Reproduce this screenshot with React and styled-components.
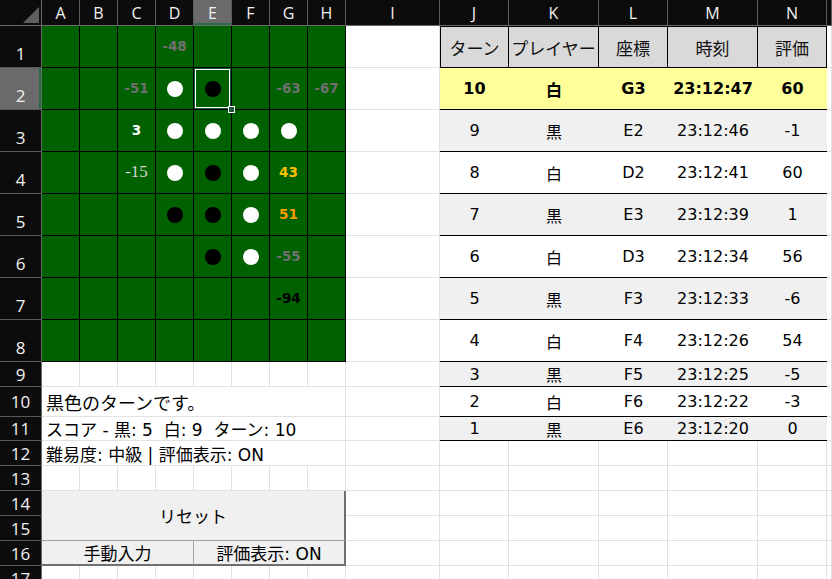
import React from "react";
import styled, { createGlobalStyle, css } from "styled-components";

const GlobalStyle = createGlobalStyle`
  html, body { margin: 0; padding: 0; background: #fff; overflow: hidden; }
  body { font-family: "DejaVu Sans", "Noto Sans CJK JP", sans-serif; }
  * { box-sizing: border-box; }
`;

const COLS = [42, 38, 38, 38, 38, 38, 38, 38, 38, 94, 69, 90, 69, 90, 69];
const ROWS = [26, 42, 42, 42, 42, 42, 42, 42, 42, 25, 30, 24, 25, 25, 25, 25, 25, 25];
const LETTERS = ["A", "B", "C", "D", "E", "F", "G", "H", "I", "J", "K", "L", "M", "N", "O"];

const GRID = "#e1e1e1";
const JP = `"DejaVu Sans", "Noto Sans CJK JP", sans-serif`;

// board: B disc black, W disc white, otherwise score {v, tone}
const BOARD = [
  [null, null, null, { v: "-48", tone: "gray" }, null, null, null, null],
  [null, null, { v: "-51", tone: "gray" }, "W", "B", null, { v: "-63", tone: "gray" }, { v: "-67", tone: "gray" }],
  [null, null, { v: "3", tone: "white" }, "W", "W", "W", "W", null],
  [null, null, { v: "-15", tone: "light" }, "W", "B", "W", { v: "43", tone: "yellow" }, null],
  [null, null, null, "B", "B", "W", { v: "51", tone: "orange" }, null],
  [null, null, null, null, "B", "W", { v: "-55", tone: "gray" }, null],
  [null, null, null, null, null, null, { v: "-94", tone: "black" }, null],
  [null, null, null, null, null, null, null, null],
];

const MOVES = [
  ["10", "白", "G3", "23:12:47", "60"],
  ["9", "黒", "E2", "23:12:46", "-1"],
  ["8", "白", "D2", "23:12:41", "60"],
  ["7", "黒", "E3", "23:12:39", "1"],
  ["6", "白", "D3", "23:12:34", "56"],
  ["5", "黒", "F3", "23:12:33", "-6"],
  ["4", "白", "F4", "23:12:26", "54"],
  ["3", "黒", "F5", "23:12:25", "-5"],
  ["2", "白", "F6", "23:12:22", "-3"],
  ["1", "黒", "E6", "23:12:20", "0"],
];

const TONES = {
  gray: "#6f6f6f",
  white: "#ffffff",
  light: "#d4d4d4",
  yellow: "#ffc000",
  orange: "#ff9900",
  black: "#000000",
};

const Sheet = styled.div`
  display: grid;
  grid-template-columns: ${COLS.map((w) => w + "px").join(" ")} 1fr;
  grid-template-rows: ${ROWS.map((h) => h + "px").join(" ")};
  width: 832px;
  height: 579px;
  overflow: hidden;
  background: #fff;
`;

const Corner = styled.div`
  background: #0c0c0c;
  border-right: 1px solid #6a6a6a;
  border-bottom: 1px solid #6a6a6a;
  display: flex;
  align-items: flex-end;
  justify-content: flex-end;
  padding: 0 2px 2px 0;
`;

const ColHead = styled.div`
  background: ${(p) => (p.$active ? "#6a6a6a" : "#0c0c0c")};
  color: #f2f2f2;
  font-family: "Open Sans", "Liberation Sans", sans-serif;
  font-size: 16px;
  display: flex;
  align-items: center;
  justify-content: center;
  border-right: 1px solid #5a5a5a;
  border-bottom: 1px solid #6a6a6a;
  ${(p) => p.$active && css`box-shadow: inset 0 -2px 0 #2b6a44;`}
`;

const RowHead = styled.div`
  background: ${(p) => (p.$active ? "#6a6a6a" : "#0c0c0c")};
  color: #f2f2f2;
  font-family: "Open Sans", "Liberation Sans", sans-serif;
  font-size: 17px;
  display: flex;
  justify-content: center;
  align-items: ${(p) => (p.$tall ? "flex-end" : "center")};
  padding-bottom: ${(p) => (p.$tall ? "2px" : "0")};
  border-right: 1px solid #6a6a6a;
  border-bottom: 1px solid #5a5a5a;
  ${(p) => p.$active && css`box-shadow: inset -2px 0 0 #2b6a44;`}
`;

const Blank = styled.div`
  border-right: 1px solid ${GRID};
  border-bottom: 1px solid ${GRID};
`;

const BoardCell = styled.div`
  position: relative;
  background: #006100;
  border-right: 1px solid #000;
  border-bottom: 1px solid #000;
  display: flex;
  align-items: center;
  justify-content: center;
  ${(p) =>
    p.$selected &&
    css`
      box-shadow: inset 0 0 0 1px #1f5a36, inset 0 0 0 2px #fff;
    `}
`;

const FillHandle = styled.span`
  position: absolute;
  right: -4px;
  bottom: -4px;
  width: 7px;
  height: 7px;
  background: #1f5a36;
  border: 1px solid #fff;
  z-index: 2;
`;

const Disc = styled.span`
  width: 16px;
  height: 16px;
  border-radius: 50%;
  background: ${(p) => (p.$white ? "#fff" : "#000")};
`;

const Score = styled.span`
  font-family: ${(p) => (p.$tone === "light" ? `"Liberation Serif", serif` : `"DejaVu Sans", sans-serif`)};
  font-weight: ${(p) => (p.$tone === "light" ? 400 : 700)};
  font-size: ${(p) => (p.$tone === "light" ? "17px" : "13.5px")};
  color: ${(p) => TONES[p.$tone]};
  margin-top: -1px;
`;

const HeadCell = styled.div`
  background: #d9d9d9;
  border-top: 1px solid #000;
  border-right: 1px solid #000;
  border-bottom: 1px solid #000;
  ${(p) => p.$first && css`border-left: 1px solid #000;`}
  font-family: "Noto Sans CJK JP", sans-serif;
  font-size: 17px;
  color: #111;
  display: flex;
  align-items: center;
  justify-content: center;
`;

const DataCell = styled.div`
  background: ${(p) => p.$bg};
  border-bottom: 1px solid #000;
  font-family: ${JP};
  font-size: 16px;
  font-weight: ${(p) => (p.$bold ? 700 : 400)};
  color: #000;
  display: flex;
  align-items: center;
  justify-content: center;
`;

const Message = styled.div`
  grid-column: span 8;
  border-right: 1px solid ${GRID};
  border-bottom: 1px solid ${GRID};
  font-family: ${JP};
  font-size: ${(p) => p.$size}px;
  color: #000;
  white-space: pre;
  display: flex;
  align-items: center;
  padding-left: 4px;
  overflow: visible;
`;

const SheetButton = styled.div`
  grid-column: span ${(p) => p.$span};
  grid-row: span ${(p) => p.$rows || 1};
  background: #f0f0f0;
  font-family: ${JP};
  font-size: 17px;
  color: #000;
  display: flex;
  align-items: center;
  justify-content: center;
  border-bottom: ${(p) => (p.$rows ? "1px solid #a0a0a0" : "2px solid #6f6f6f")};
  border-right: ${(p) => (p.$edge ? "2px solid #6f6f6f" : "1px solid #a8a8a8")};
`;

const CornerMark = () => (
  <svg width="16" height="16" viewBox="0 0 16 16">
    <polygon points="16,0 16,16 0,16" fill="#5e5e5e" />
  </svg>
);

const rowBg = (i) => (i === 0 ? "#ffff99" : i % 2 === 1 ? "#f0f0f0" : "#ffffff");

export default function App() {
  const cells = [];

  // column header row
  cells.push(
    <Corner key="corner">
      <CornerMark />
    </Corner>
  );
  LETTERS.forEach((l) => {
    cells.push(
      <ColHead key={"h" + l} $active={l === "E"}>
        {l === "O" ? "" : l}
      </ColHead>
    );
  });

  for (let r = 1; r <= 17; r++) {
    const tall = r <= 8;
    cells.push(
      <RowHead key={"r" + r} $tall={tall} $active={r === 2}>
        {r}
      </RowHead>
    );

    // A..H
    if (r <= 8) {
      BOARD[r - 1].forEach((c, ci) => {
        const selected = r === 2 && ci === 4;
        cells.push(
          <BoardCell key={`b${r}-${ci}`} $selected={selected}>
            {c === "W" && <Disc $white />}
            {c === "B" && <Disc />}
            {c && typeof c === "object" && <Score $tone={c.tone}>{c.v}</Score>}
            {selected && <FillHandle />}
          </BoardCell>
        );
      });
    } else if (r === 10) {
      cells.push(<Message key="m10" $size={18}>黒色のターンです。</Message>);
    } else if (r === 11) {
      cells.push(<Message key="m11" $size={17}>{"スコア - 黒: 5  白: 9  ターン: 10"}</Message>);
    } else if (r === 12) {
      cells.push(<Message key="m12" $size={17}>難易度: 中級 | 評価表示: ON</Message>);
    } else if (r === 14) {
      cells.push(
        <SheetButton key="reset" $span={8} $rows={2} $edge>
          リセット
        </SheetButton>
      );
    } else if (r === 15) {
      // covered by reset button
    } else if (r === 16) {
      cells.push(
        <SheetButton key="manual" $span={4}>
          手動入力
        </SheetButton>
      );
      cells.push(
        <SheetButton key="evalbtn" $span={4} $edge>
          評価表示: ON
        </SheetButton>
      );
    } else {
      for (let c = 0; c < 8; c++) cells.push(<Blank key={`g${r}-${c}`} />);
    }

    // I
    cells.push(<Blank key={`i${r}`} />);

    // J..N
    if (r === 1) {
      ["ターン", "プレイヤー", "座標", "時刻", "評価"].forEach((t, i) => {
        cells.push(
          <HeadCell key={"th" + i} $first={i === 0}>
            {t}
          </HeadCell>
        );
      });
    } else if (r - 2 < MOVES.length) {
      const i = r - 2;
      MOVES[i].forEach((t, k) => {
        cells.push(
          <DataCell key={`d${r}-${k}`} $bg={rowBg(i)} $bold={i === 0}>
            {t}
          </DataCell>
        );
      });
    } else {
      for (let c = 0; c < 5; c++) cells.push(<Blank key={`t${r}-${c}`} />);
    }

    // O
    cells.push(<Blank key={`o${r}`} />);
  }

  return (
    <>
      <GlobalStyle />
      <Sheet>{cells}</Sheet>
    </>
  );
}
